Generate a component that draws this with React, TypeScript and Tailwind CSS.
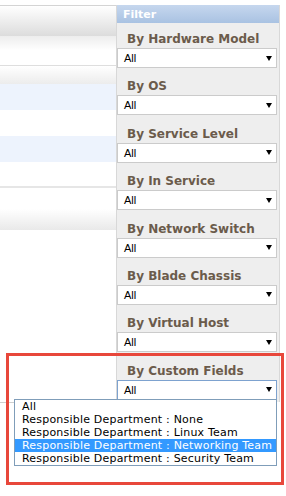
import React from "react";

const filters = [
  "By Hardware Model",
  "By OS",
  "By Service Level",
  "By In Service",
  "By Network Switch",
  "By Blade Chassis",
  "By Virtual Host",
  "By Custom Fields",
];

const options = [
  "All",
  "Responsible Department : None",
  "Responsible Department : Linux Team",
  "Responsible Department : Networking Team",
  "Responsible Department : Security Team",
];

const Arrow = () => (
  <svg width="6" height="5" viewBox="0 0 6 5">
    <polygon points="0,0 6,0 3,5" fill="#000" />
  </svg>
);

const SelectBox: React.FC<{ focused?: boolean }> = ({ focused }) => (
  <div
    className={
      focused
        ? "h-[20px] w-[160px] border border-[#7da2cf] bg-white flex items-center justify-between pl-[6px] pr-[4px] text-[11px] text-black"
        : "h-[20px] w-[160px] border border-[#cbcbcb] bg-white flex items-center justify-between pl-[6px] pr-[4px] text-[11px] text-black"
    }
  >
    <span className="leading-[14px] font-['Liberation_Sans',sans-serif]">All</span>
    <Arrow />
  </div>
);

const GridPanel = () => (
  <div className="w-[116px] border-t border-[#d4d4d4]">
    <div className="h-[30px] bg-linear-to-b from-white to-[#dcdcdc]" />
    <div className="h-[30px] bg-linear-to-b from-[#ededed] via-white to-white border-b border-[#dedede]" />
    <div className="h-[18px] bg-linear-to-b from-white to-[#ececec]" />
    <div className="h-[26px] bg-[#edf3fd]" />
    <div className="h-[26px] bg-white" />
    <div className="h-[26px] bg-[#edf3fd]" />
    <div className="h-[26px] bg-white border-b-2 border-[#e6e6e6]" />
    <div className="h-[42px] bg-linear-to-b from-white via-white to-[#e9e9e9]" />
    <div className="h-[173px] bg-white border-b border-[#cfcfcf]" />
  </div>
);

export default function App() {
  return (
    <div className="relative w-[286px] h-[496px] bg-white overflow-hidden font-['DejaVu_Sans',sans-serif]">
      <div className="flex items-start pt-[5px]">
        <GridPanel />
        <div className="w-[164px] bg-[#eeeeee] border-l border-r border-[#d8d8d8] pb-[2px]">
          <div className="h-[18px] bg-linear-to-b from-[#c6d7ee] to-[#a9c2e2] pl-[6px] pt-[1px] text-[11px] leading-[17px] font-bold text-white">
            Filter
          </div>
          {filters.map((label, i) => (
            <div key={label}>
              <div
                className={
                  i === 0
                    ? "h-[25px] flex items-end pl-[10px] pb-[2px] text-[12px] leading-[14px] font-bold text-[#6b5b4b]"
                    : "h-[27.4px] flex items-end pl-[10px] pb-[2px] text-[12px] leading-[14px] font-bold text-[#6b5b4b]"
                }
              >
                {label}
              </div>
              <SelectBox focused={i === filters.length - 1} />
            </div>
          ))}
        </div>
      </div>

      {/* open dropdown */}
      <div className="absolute left-[14px] top-[399px] w-[263px] border border-[#7f9db9] bg-white text-[11px] tracking-[0.2px] text-black">
        {options.map((opt) => (
          <div
            key={opt}
            className={
              opt.endsWith("Networking Team")
                ? "h-[13px] leading-[13px] pl-[7px] bg-[#3399ff] text-white whitespace-nowrap"
                : "h-[13px] leading-[13px] pl-[7px] whitespace-nowrap"
            }
          >
            {opt}
          </div>
        ))}
      </div>

      {/* highlight annotation */}
      <div className="absolute left-[6px] top-[353px] w-[278px] h-[132px] border-[3px] border-[#e8473b]" />
    </div>
  );
}
